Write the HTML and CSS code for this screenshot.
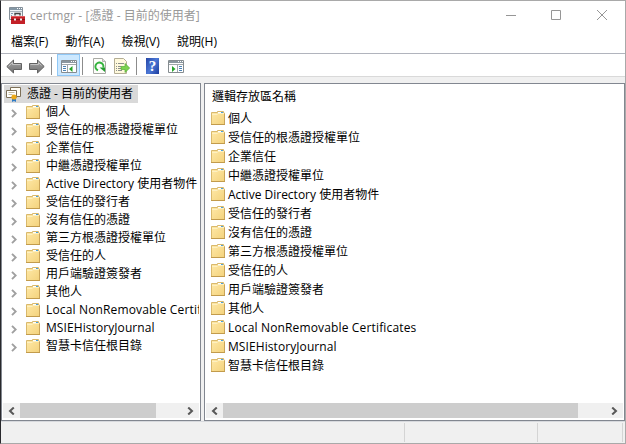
FILE: index.html
```html
<!DOCTYPE html>
<html lang="zh-Hant">
<head>
<meta charset="utf-8">
<title>certmgr</title>
<link rel="stylesheet" href="styles.css">
</head>
<body>
<svg class="defs" width="0" height="0">
  <defs>
    <linearGradient id="fg" x1="0" y1="0" x2="1" y2="1"><stop offset="0" stop-color="#ffe9a8"/><stop offset="1" stop-color="#f3d27c"/></linearGradient>
    <linearGradient id="ag" x1="0" y1="0" x2="0" y2="1"><stop offset="0" stop-color="#a8a8a8"/><stop offset="1" stop-color="#707070"/></linearGradient>
    <symbol id="folder" viewBox="0 0 14 14">
      <path d="M.5 1.500H6.500V.5h6v1.500h1v11.500H.5z" fill="url(#fg)" stroke="#d9b96c"/>
      <path d="M7 1.500h5" stroke="#fff"/><path d="M10 1.500h2" stroke="#4aa0dc"/>
      <path d="M1 3.500h5.500M7 2.500h6" fill="none" stroke="#fdf0c2"/>
      <path d="M0 13.500h14" stroke="#c29b4c"/><path d="M13.500 3v10" stroke="#c9a45a"/>
    </symbol>
    <symbol id="chev" viewBox="0 0 6 9"><path d="M1 .8l3.700 3.700L1 8.200" fill="none" stroke="#a0a0a0" stroke-width="1.900"/></symbol>
    <symbol id="sl" viewBox="0 0 7 8"><path d="M5.800.5L2 4l3.800 3.500" fill="none" stroke="#585858" stroke-width="2"/></symbol>
    <symbol id="sr" viewBox="0 0 7 8"><path d="M1.200.5L5 4 1.200 7.500" fill="none" stroke="#585858" stroke-width="2"/></symbol>
    <symbol id="page" viewBox="0 0 14 16"><path d="M.5.5h10l3 3v12H.5z" fill="#fdfdfa" stroke="#a9aaa5"/><path d="M10.500.5v3h3" fill="#ddd" stroke="#b5b5b0"/></symbol>
  </defs>
</svg>
<div class="window">
  <header class="title">
    <svg class="app" width="17" height="17" viewBox="0 0 17 17"><path d="M.5.5h13v12H.5z" fill="#eef2f4" stroke="#84909a"/><path d="M1 2h12" stroke="#8497a5" stroke-width="2"/><path d="M8 1.500h1m1 0h1m1 0h1" stroke="#fff"/><path d="M1 4.500h12" stroke="#a9b4bd"/><path d="M2 6.500h2M2 8.500h1" stroke="#7d98b0"/><path d="M6 8.500V6.500h5V8.500" fill="none" stroke="#444" stroke-width="1.400"/><path d="M2 9h14v8H2z" fill="#c32027"/><path d="M2 9.500h14" stroke="#e2575a"/><path d="M2 12.500h14" stroke="#8c1117"/><path d="M5 11.500h2v2H5zm6 0h2v2h-2z" fill="#eee"/></svg>
    <span class="caption"><span class="lt">certmgr - [</span>憑證 - 目前的使用者]</span>
    <svg class="controls" width="106" height="11" viewBox="0 0 106 11" fill="none" stroke="#969696"><path d="M0 5.500h10M45.500.500h9v9h-9zM91 0l10 10M101 0L91 10"/></svg>
  </header>
  <nav class="menu"><span>檔案(F)</span><span>動作(A)</span><span>檢視(V)</span><span>說明(H)</span></nav>
  <div class="toolbar">
    <svg class="arrow" width="16" height="15" viewBox="0 0 16 15"><path d="M.8 7.500L7.500 1v3.500h8v6h-8V14z" fill="url(#ag)" stroke="#626262"/><path d="M2.500 7.300L6.500 3.500v2h8" fill="none" stroke="#c4c4c4"/></svg>
    <svg class="arrow" width="16" height="15" viewBox="0 0 16 15"><path d="M15.200 7.500L8.500 1v3.500h-8v6h8V14z" fill="url(#ag)" stroke="#626262"/><path d="M1.500 5.500h8v-2l3 3" fill="none" stroke="#c4c4c4"/></svg>
    <i class="sep s1"></i>
    <span class="active"><svg width="16" height="13" viewBox="0 0 16 13"><path d="M.5.500h15v12H.5z" fill="#fff" stroke="#858c90"/><path d="M1 2h14" stroke="#8b979f" stroke-width="2"/><path d="M10 1.500h1m1 0h1m1 0h1" stroke="#fff"/><path d="M1 4.500h14M6.500 5v7" stroke="#a1a7aa"/><path d="M2 6.500h3M2 8.500h3M2 10.500h3" stroke="#4c83b5"/><path d="M11.500 6v6L8 9z" fill="#27a42b"/></svg></span>
    <i class="sep s2"></i>
    <svg class="refresh" width="13" height="16" viewBox="0 0 13 16"><path d="M.5.500h9l3 3v12H.5z" fill="#fdfdfa" stroke="#a9aaa5"/><path d="M9.500.500v3h3" fill="#ddd" stroke="#b5b5b0"/><path d="M5 12.300A4 4 0 1 1 10.300 9.500" fill="none" stroke="#35b33e" stroke-width="2"/><path d="M6.500 9.500h5.500v4.500z" fill="#249e30"/></svg>
    <svg class="export" width="16" height="16" viewBox="0 0 16 16"><path d="M.5.500h9l3 3v12H.5z" fill="#fff9dc" stroke="#b3ad94"/><path d="M2 5.500h1m1 0h6M2 8.500h1m1 0h3M2 10.500h1m1 0h3M2 12.500h1m1 0h4" stroke="#8b8f8d"/><path d="M7 8.500h4V5.500l4.700 4.500-4.700 4.500v-3H7z" fill="#7bd34e" stroke="#55ae36" stroke-width=".7"/></svg>
    <i class="sep s3"></i>
    <span class="help">?</span>
    <svg class="action" width="16" height="13" viewBox="0 0 16 13"><path d="M.5.500h15v12H.5z" fill="#fff" stroke="#858c90"/><path d="M1 2h14" stroke="#8b979f" stroke-width="2"/><path d="M10 1.500h1m1 0h1m1 0h1" stroke="#fff"/><path d="M1 4.500h14M9.500 5v7" stroke="#a1a7aa"/><path d="M11 6.500h3M11 8.500h3M11 10.500h3" stroke="#4c83b5"/><path d="M4 6v6l3.500-3z" fill="#27a42b"/></svg>
  </div>
  <main class="panes">
    <section class="pane tree">
      <div class="content">
        <div class="root"><svg width="16" height="16" viewBox="0 0 16 16"><path d="M4.500 1.500h10v9h-10z" fill="#fffdf5" stroke="#7d7058"/><path d="M.5 4.500h10v7H.5z" fill="#fff" stroke="#7d7058"/><path d="M2.500 6.500h6M2.500 8.500h4" stroke="#c4bb9d"/><path d="M6 12v4l2-1 2 1v-4z" fill="#2d7ac5"/><circle cx="8" cy="11" r="2.600" fill="#edaa19"/></svg><span>憑證 - 目前的使用者</span></div>
        <div class="node"><svg class="chev"><use href="#chev"/></svg><svg class="folder"><use href="#folder"/></svg><span>個人</span></div>
        <div class="node"><svg class="chev"><use href="#chev"/></svg><svg class="folder"><use href="#folder"/></svg><span>受信任的根憑證授權單位</span></div>
        <div class="node"><svg class="chev"><use href="#chev"/></svg><svg class="folder"><use href="#folder"/></svg><span>企業信任</span></div>
        <div class="node"><svg class="chev"><use href="#chev"/></svg><svg class="folder"><use href="#folder"/></svg><span>中繼憑證授權單位</span></div>
        <div class="node"><svg class="chev"><use href="#chev"/></svg><svg class="folder"><use href="#folder"/></svg><span>Active Directory 使用者物件</span></div>
        <div class="node"><svg class="chev"><use href="#chev"/></svg><svg class="folder"><use href="#folder"/></svg><span>受信任的發行者</span></div>
        <div class="node"><svg class="chev"><use href="#chev"/></svg><svg class="folder"><use href="#folder"/></svg><span>沒有信任的憑證</span></div>
        <div class="node"><svg class="chev"><use href="#chev"/></svg><svg class="folder"><use href="#folder"/></svg><span>第三方根憑證授權單位</span></div>
        <div class="node"><svg class="chev"><use href="#chev"/></svg><svg class="folder"><use href="#folder"/></svg><span>受信任的人</span></div>
        <div class="node"><svg class="chev"><use href="#chev"/></svg><svg class="folder"><use href="#folder"/></svg><span>用戶端驗證簽發者</span></div>
        <div class="node"><svg class="chev"><use href="#chev"/></svg><svg class="folder"><use href="#folder"/></svg><span>其他人</span></div>
        <div class="node"><svg class="chev"><use href="#chev"/></svg><svg class="folder"><use href="#folder"/></svg><span class="local">Local NonRemovable Certificates</span></div>
        <div class="node"><svg class="chev"><use href="#chev"/></svg><svg class="folder"><use href="#folder"/></svg><span class="msie">MSIEHistoryJournal</span></div>
        <div class="node"><svg class="chev"><use href="#chev"/></svg><svg class="folder"><use href="#folder"/></svg><span>智慧卡信任根目錄</span></div>
      </div>
      <div class="scroll"><svg><use href="#sl"/></svg><i class="thumb"></i><svg><use href="#sr"/></svg></div>
    </section>
    <section class="pane list">
      <div class="content">
        <div class="head">邏輯存放區名稱</div>
        <div class="item"><svg class="folder"><use href="#folder"/></svg><span>個人</span></div>
        <div class="item"><svg class="folder"><use href="#folder"/></svg><span>受信任的根憑證授權單位</span></div>
        <div class="item"><svg class="folder"><use href="#folder"/></svg><span>企業信任</span></div>
        <div class="item"><svg class="folder"><use href="#folder"/></svg><span>中繼憑證授權單位</span></div>
        <div class="item"><svg class="folder"><use href="#folder"/></svg><span>Active Directory 使用者物件</span></div>
        <div class="item"><svg class="folder"><use href="#folder"/></svg><span>受信任的發行者</span></div>
        <div class="item"><svg class="folder"><use href="#folder"/></svg><span>沒有信任的憑證</span></div>
        <div class="item"><svg class="folder"><use href="#folder"/></svg><span>第三方根憑證授權單位</span></div>
        <div class="item"><svg class="folder"><use href="#folder"/></svg><span>受信任的人</span></div>
        <div class="item"><svg class="folder"><use href="#folder"/></svg><span>用戶端驗證簽發者</span></div>
        <div class="item"><svg class="folder"><use href="#folder"/></svg><span>其他人</span></div>
        <div class="item"><svg class="folder"><use href="#folder"/></svg><span class="local">Local NonRemovable Certificates</span></div>
        <div class="item"><svg class="folder"><use href="#folder"/></svg><span class="msie">MSIEHistoryJournal</span></div>
        <div class="item"><svg class="folder"><use href="#folder"/></svg><span>智慧卡信任根目錄</span></div>
      </div>
      <div class="scroll"><svg><use href="#sl"/></svg><i class="thumb"></i><svg><use href="#sr"/></svg></div>
    </section>
  </main>
  <footer class="status"><i></i><i></i><i></i></footer>
</div>
</body>
</html>
```
FILE: styles.css
```css
* { box-sizing: border-box; }
body { margin: 0; font: 12px/18px "Open Sans", "Noto Sans CJK TC", sans-serif; color: #000; }
.defs { display: block; }
svg { flex: none; display: block; }
.window {
  width: 626px; height: 444px; overflow: hidden; background: #fff;
  border: 1px solid #a9a9a9; border-left-color: #28282c;
  display: flex; flex-direction: column;
  white-space: nowrap;
  position: relative;
}
.window::before, .window::after { content: ""; position: absolute; left: -1px; width: 240px; height: 1px; background: #28282c; }
.window::before { top: -1px; }
.window::after { bottom: -1px; }
.lt { letter-spacing: .12px; }
.local { letter-spacing: .15px; }
.msie { letter-spacing: .08px; }
.title { height: 29px; display: flex; align-items: center; padding-left: 8px; color: #999; }
.caption { margin-left: 4px; }
.controls { margin-left: auto; margin-right: 13px; }
.menu { height: 23px; display: flex; padding: 3px 0 0 10px; gap: 17.300px; }
.toolbar { height: 24px; border-top: 1px solid #b1b4bd; border-bottom: 1px solid #d9d9d9; display: flex; align-items: center; padding-left: 5px; }
.arrow { margin-top: 2px; }
.arrow + .arrow { margin-left: 7px; }
.sep { width: 1px; height: 18px; background: #8c8c8c; margin-top: 1px; }
.s1 { margin-left: 6px; }
.active { width: 23px; height: 22px; margin-left: 5px; border: 1px solid #90c8f6; background: #cce8ff; display: flex; align-items: center; justify-content: center; padding-top: 3px; }
.s2 { margin-left: 2px; }
.refresh, .export { margin-top: 1px; }
.refresh { margin-left: 10px; }
.export { margin-left: 8px; }
.s3 { margin-left: 6px; }
.help { width: 13px; height: 16px; margin: 1px 0 0 9px; background: linear-gradient(120deg, #2545a5, #4c78d6 50%, #1c3c9d); color: #fff; font: bold 15px/16px "Liberation Serif", serif; text-align: center; }
.action { margin: 3px 0 0 9px; }
.panes { height: 344px; padding-top: 6px; background: #f0f0f0; display: flex; gap: 3px; }
.pane { border: 1px solid #828790; background: #fff; display: flex; flex-direction: column; overflow: hidden; height: 338px; }
.tree { width: 200px; }
.list { width: 421px; }
.content { flex: 1; overflow: hidden; margin-right: 1px; padding: 1px 2px 0; }
.folder { width: 14px; height: 14px; }
.root { width: 134px; height: 18px; background: #d9d9d9; display: flex; align-items: center; padding-left: 2px; gap: 5px; }
.node { height: 18px; display: flex; align-items: center; padding-left: 7px; }
.chev { width: 6px; height: 9px; margin-top: 3px; }
.node .folder { margin: 0 6px 0 9px; }
.head { height: 24px; padding: 3px 0 0 5px; }
.item { height: 19px; display: flex; align-items: center; padding-left: 4px; gap: 3px; }
.item .folder { margin-bottom: 2px; }
.scroll { height: 15px; margin: 0 1px 2px; background: #f0f0f0; display: flex; align-items: center; padding: 0 5px; }
.scroll svg { width: 7px; height: 8px; }
.thumb { height: 15px; margin: 0 auto 0 5px; background: #cdcdcd; }
.tree .thumb { width: 136px; }
.list .thumb { width: 355px; }
.status { height: 22px; border-top: 1px solid #d7d9dd; background: #f0f0f0; display: flex; justify-content: flex-end; padding-right: 2px; }
.status i { width: 1px; height: 19px; margin-top: 1px; background: #d4d4d4; }
.status i:nth-child(2) { margin-left: 132px; }
.status i:nth-child(3) { margin-left: 84px; }
```
